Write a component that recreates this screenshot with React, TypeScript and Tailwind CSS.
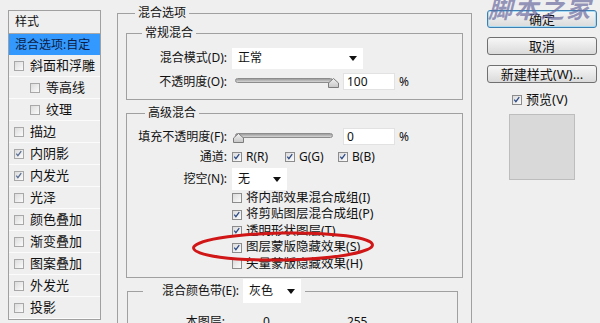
import React from "react";

// Photoshop 图层样式 对话框 — 混合选项 页面

function Check({ on = false, soft = false }: { on?: boolean; soft?: boolean }) {
  return (
    <span
      className={
        "relative inline-block h-[10px] w-[10px] shrink-0 border bg-linear-to-br from-[#dcdcdc] to-[#fbfbfb] " +
        (soft ? "border-[#a8a8a8]" : "border-[#8c8c8c]")
      }
    >
      {on && (
        <svg viewBox="0 0 10 10" className="absolute left-0 top-0 h-[8px] w-[8px]" aria-hidden>
          <path
            d="M1.6 4.6 L3.6 7 L7.8 1.4"
            fill="none"
            stroke={soft ? "#5a6f94" : "#2c4a86"}
            strokeWidth="1.6"
          />
        </svg>
      )}
    </span>
  );
}

function Arrow() {
  return (
    <svg viewBox="0 0 8 5" className="h-[5px] w-[8px]" aria-hidden>
      <path d="M0 0 H8 L4 5 Z" fill="#111" />
    </svg>
  );
}

function Select({ value, w, h = "h-[21px]" }: { value: string; w: string; h?: string }) {
  return (
    <div className={`flex ${w} ${h} shrink-0 items-center justify-between bg-white pl-[6px] pr-[6px] text-[12px]`}>
      <span>{value}</span>
      <Arrow />
    </div>
  );
}

function Slider({ at }: { at: number }) {
  return (
    <div className="relative h-[19px] w-[98px] shrink-0">
      <div className="absolute left-0 right-0 top-[6px] h-[5px] rounded-full border border-[#8c8c8c] bg-linear-to-b from-[#9c9c9c] to-[#d6d6d6]" />
      <svg
        viewBox="0 0 11 10"
        className="absolute top-[6px] h-[10px] w-[11px]"
        style={{ left: at - 5 }}
        aria-hidden
      >
        <defs>
          <linearGradient id={`th${at}`} x1="0" y1="0" x2="0" y2="1">
            <stop offset="0" stopColor="#f2f2f2" />
            <stop offset="1" stopColor="#c6c6c6" />
          </linearGradient>
        </defs>
        <path d="M0.5 9.5 V5 L5.5 0.5 L10.5 5 V9.5 Z" fill={`url(#th${at})`} stroke="#7c7c7c" />
      </svg>
    </div>
  );
}

function Field({ value }: { value: string }) {
  return (
    <div className="ml-[10px] flex h-[17px] w-[52px] items-center border border-[#e2e2e2] bg-white pl-[3px] text-[12px]">
      {value}
    </div>
  );
}

function Btn({ children, main = false }: { children: React.ReactNode; main?: boolean }) {
  return (
    <div
      className={
        "flex h-[18px] items-center justify-center rounded-[3px] border bg-linear-to-b from-[#f7f7f7] to-[#dadada] text-[13px] leading-none " +
        (main ? "border-[#3c7fb1] shadow-[inset_0_0_0_1px_#a8dcf4]" : "border-[#707070]")
      }
    >
      {children}
    </div>
  );
}

const styles = [
  { label: "斜面和浮雕", sub: false, on: false },
  { label: "等高线", sub: true, on: false },
  { label: "纹理", sub: true, on: false },
  { label: "描边", sub: false, on: false },
  { label: "内阴影", sub: false, on: true },
  { label: "内发光", sub: false, on: true },
  { label: "光泽", sub: false, on: false },
  { label: "颜色叠加", sub: false, on: false },
  { label: "渐变叠加", sub: false, on: false },
  { label: "图案叠加", sub: false, on: false },
  { label: "外发光", sub: false, on: false },
  { label: "投影", sub: false, on: false },
];

const options = [
  { label: "将内部效果混合成组(I)", on: false },
  { label: "将剪贴图层混合成组(P)", on: true },
  { label: "透明形状图层(T)", on: true },
  { label: "图层蒙版隐藏效果(S)", on: true },
  { label: "矢量蒙版隐藏效果(H)", on: false },
];

export default function App() {
  return (
    <div className="relative flex h-[323px] w-[600px] items-start overflow-hidden bg-[#efefef] pl-[8px] font-['Noto_Sans','Noto_Sans_CJK_SC',sans-serif] text-[12px] text-[#111]">
      {/* 样式列表 */}
      <div className="mt-[10px] w-[93px] shrink-0 border border-[#a0a0a0]">
        <div className="flex h-[23px] items-center border-b border-[#a8a8a8] pl-[6px] text-[12px]">样式</div>
        <div className="flex h-[21px] items-center bg-[#3399ff] pl-[6px] text-[12px] text-[#0c1c44]">
          混合选项:自定
        </div>
        {styles.map((s) => (
          <div
            key={s.label}
            className={
              "flex h-[22px] items-center gap-[6px] border-b border-[#fbfbfb] text-[13px] " +
              (s.sub ? "pl-[21px]" : "pl-[5px]")
            }
          >
            <Check on={s.on} soft />
            <span>{s.label}</span>
          </div>
        ))}
      </div>

      {/* 混合选项 */}
      <fieldset className="ml-[16px] mt-[5px] h-[360px] w-[355px] shrink-0 border border-[#a0a0a0]">
        <legend className="ml-[17px] px-[3px] text-[12px] leading-[16px]">混合选项</legend>

        <fieldset className="mx-[8px] mt-[4px] border border-[#a0a0a0] pb-[8px]">
          <legend className="ml-[15px] px-[3px] leading-[16px]">常规混合</legend>
          <div className="mt-[6px] flex h-[22px] items-center">
            <span className="w-[100px] text-right">混合模式(D):</span>
            <div className="ml-[5px]">
              <Select value="正常" w="w-[131px]" />
            </div>
          </div>
          <div className="mt-[3px] flex h-[19px] items-center">
            <span className="w-[100px] text-right">不透明度(O):</span>
            <div className="ml-[8px]">
              <Slider at={98} />
            </div>
            <Field value="100" />
            <span className="ml-[4px]">%</span>
          </div>
        </fieldset>

        <fieldset className="mx-[8px] mt-[5px] border border-[#a0a0a0] pb-[4.5px]">
          <legend className="ml-[18px] px-[3px] leading-[16px]">高级混合</legend>
          <div className="mt-[6px] flex h-[19px] items-center">
            <span className="w-[100px] text-right">填充不透明度(F):</span>
            <div className="ml-[8px]">
              <Slider at={3} />
            </div>
            <Field value="0" />
            <span className="ml-[4px]">%</span>
          </div>
          <div className="mt-[2px] flex h-[18px] items-center">
            <span className="w-[100px] text-right">通道:</span>
            <div className="ml-[5px] flex w-[53px] items-center gap-[4px]">
              <Check on />
              <span>R(R)</span>
            </div>
            <div className="flex w-[53px] items-center gap-[4px]">
              <Check on />
              <span>G(G)</span>
            </div>
            <div className="flex items-center gap-[4px]">
              <Check on />
              <span>B(B)</span>
            </div>
          </div>
          <div className="mt-[2px] flex h-[22px] items-center">
            <span className="w-[100px] text-right">挖空(N):</span>
            <div className="ml-[5px]">
              <Select value="无" w="w-[55px]" h="h-[22px]" />
            </div>
          </div>
          <div className="flex flex-col pl-[105px]">
            {options.map((o) => (
              <div key={o.label} className="flex h-[16.5px] items-center gap-[4px] text-[12.5px]">
                <Check on={o.on} />
                <span>{o.label}</span>
              </div>
            ))}
          </div>
        </fieldset>

        <fieldset className="ml-[9px] mr-[13px] mt-[1px] h-[80px] border border-[#a0a0a0]">
          <legend className="ml-[15px] pl-[19px] pr-[4px]">
            <div className="flex items-center gap-[4px]">
              <span>混合颜色带(E):</span>
              <Select value="灰色" w="w-[58px]" h="h-[24px]" />
            </div>
          </legend>
          <div className="mt-[11px] flex leading-[16px]">
            <span className="w-[97px] text-right">本图层:</span>
            <span className="ml-[38px]">0</span>
            <span className="ml-[77px]">255</span>
          </div>
        </fieldset>
      </fieldset>

      {/* 右侧按钮 */}
      <div className="ml-[15px] mt-[10px] flex w-[110px] shrink-0 flex-col">
        <Btn main>确定</Btn>
        <div className="mt-[9px]">
          <Btn>取消</Btn>
        </div>
        <div className="mt-[10px]">
          <Btn>新建样式(W)...</Btn>
        </div>
        <div className="mt-[9px] flex h-[16px] items-center gap-[4px] pl-[25px] text-[13px]">
          <Check on />
          <span>预览(V)</span>
        </div>
        <div className="ml-[22px] mt-[6px] h-[66px] w-[66px] border border-[#bdbdbd] bg-[#d9d9d9]" />
      </div>

      {/* 水印 */}
      <div className="pointer-events-none absolute left-[488px] top-[-6px] text-[24px] font-bold italic leading-[30px] tracking-[2px] text-[#6a6aa0]/70">
        脚本之家
      </div>

      {/* 红圈标注 */}
      <svg className="pointer-events-none absolute left-0 top-0 h-[323px] w-[600px]" viewBox="0 0 600 323" aria-hidden>
        <ellipse cx="283" cy="246.5" rx="89.5" ry="13.5" fill="none" stroke="#d01616" strokeWidth="3" transform="rotate(-1 283 246.5)" />
      </svg>
    </div>
  );
}
